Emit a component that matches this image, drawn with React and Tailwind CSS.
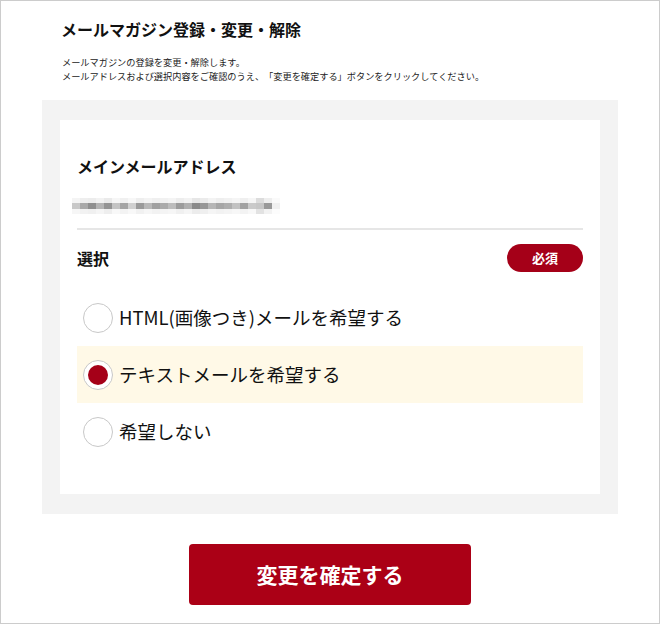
const blur = [
  ["#f4f4f4", "#c8c8c8", "#f6f6f6"],
  ["#eeeeee", "#a9a9a9", "#f2f2f2"],
  ["#ececec", "#8f8f8f", "#f0f0f0"],
  ["#f2f2f2", "#b4b4b4", "#f5f5f5"],
  ["#eaeaea", "#949494", "#eeeeee"],
  ["#f6f6f6", "#c4c4c4", "#f8f8f8"],
  ["#f0f0f0", "#a4a4a4", "#f3f3f3"],
  ["#f7f7f7", "#d0d0d0", "#f8f8f8"],
  ["#eeeeee", "#9a9a9a", "#f1f1f1"],
  ["#f3f3f3", "#b8b8b8", "#f6f6f6"],
  ["#efefef", "#a0a0a0", "#f2f2f2"],
  ["#f1f1f1", "#ababab", "#f4f4f4"],
  ["#f4f4f4", "#bdbdbd", "#f6f6f6"],
  ["#ededed", "#9c9c9c", "#f0f0f0"],
  ["#f2f2f2", "#b0b0b0", "#f5f5f5"],
  ["#e6e6e6", "#8a8a8a", "#ececec"],
  ["#ebebeb", "#979797", "#efefef"],
  ["#f3f3f3", "#b6b6b6", "#f5f5f5"],
  ["#eeeeee", "#a6a6a6", "#f2f2f2"],
  ["#f1f1f1", "#aeaeae", "#f4f4f4"],
  ["#f5f5f5", "#c2c2c2", "#f7f7f7"],
  ["#efefef", "#a2a2a2", "#f3f3f3"],
  ["#f6f6f6", "#cacaca", "#f8f8f8"],
  ["#dcdcdc", "#c6c6c6", "#e2e2e2"],
  ["#eeeeee", "#999999", "#f2f2f2"],
  ["#fafafa", "#f0f0f0", "#fcfcfc"],
];

const options = [
  { label: "HTML(画像つき)メールを希望する", checked: false },
  { label: "テキストメールを希望する", checked: true },
  { label: "希望しない", checked: false },
];

function Radio({ checked }) {
  return (
    <span className="flex h-[30px] w-[30px] shrink-0 items-center justify-center rounded-full border border-[#c8c8c8] bg-white">
      {checked && <span className="h-[20px] w-[20px] rounded-full bg-[#a50018]" />}
    </span>
  );
}

export default function App() {
  return (
    <div
      className="flex h-[624px] w-[660px] flex-col border border-[#cccccc] bg-white text-[#111] [text-spacing-trim:space-all]"
      style={{ fontFamily: '"Noto Sans CJK JP", "Noto Sans", sans-serif' }}
    >
      <h1 className="pl-[60px] pt-[16px] text-[16px] font-bold leading-[24px]">
        メールマガジン登録・変更・解除
      </h1>
      <div className="mt-[14px] pl-[61px] text-[9.2px] leading-[14px] text-[#222]">
        <p>メールマガジンの登録を変更・解除します。</p>
        <p>メールアドレスおよび選択内容をご確認のうえ、「変更を確定する」ボタンをクリックしてください。</p>
      </div>

      <div className="ml-[41px] mt-[17px] w-[576px] bg-[#f3f3f3] px-[18px] py-[20px]">
        <div className="bg-white px-[17px] pb-[34px] pt-[34px]">
          <h2 className="text-[16px] font-bold leading-[24px]">メインメールアドレス</h2>
          <div className="ml-[-5px] mt-[20px] flex h-[16px]">
            {blur.map((c, i) => (
              <div key={i} className="flex w-[8px] flex-col">
                <div className="h-[5px]" style={{ background: c[0] }} />
                <div className="h-[6px]" style={{ background: c[1] }} />
                <div className="h-[5px]" style={{ background: c[2] }} />
              </div>
            ))}
          </div>
          <div className="mt-[14px] h-[2px] bg-[#e6e6e6]" />

          <div className="mt-[14px] flex items-center justify-between">
            <span className="text-[16px] font-bold leading-[24px]">選択</span>
            <span className="flex h-[28px] w-[76px] items-center justify-center rounded-full bg-[#a50018] text-[13px] font-bold text-white">
              必須
            </span>
          </div>

          <div className="mt-[17px] flex flex-col">
            {options.map((o) => (
              <label
                key={o.label}
                className={`flex h-[57px] items-center gap-[6px] pl-[6px] ${o.checked ? "bg-[#fff9e7]" : ""}`}
              >
                <Radio checked={o.checked} />
                <span className="text-[18.5px] leading-none text-[#111]">{o.label}</span>
              </label>
            ))}
          </div>
        </div>
      </div>

      <button className="mx-auto mt-[30px] flex h-[61px] w-[282px] items-center justify-center rounded-[4px] bg-[#ab0016] text-[21px] font-bold text-white">
        変更を確定する
      </button>
    </div>
  );
}
